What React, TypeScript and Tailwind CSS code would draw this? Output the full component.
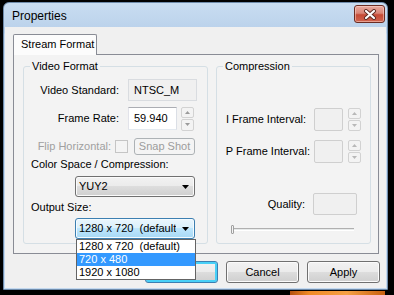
import React from "react";

const btn =
  "border border-[#707070] rounded-[3px] bg-[linear-gradient(#f2f2f2_0%,#ebebeb_50%,#dddddd_50%,#cfcfcf_100%)] shadow-[inset_0_0_0_1px_#fbfbfb]";

function Spinner({ dim = false }: { dim?: boolean }) {
  const c = dim ? "#b8b8b8" : "#9a9a9a";
  return (
    <div className="flex flex-col gap-[1px] w-[13px] h-full">
      <div className="flex-1 border border-[#d2d2d2] rounded-[2px] bg-[#f3f3f3] flex items-center justify-center">
        <svg width="5" height="3" viewBox="0 0 5 3">
          <path d="M0 3 L2.5 0 L5 3Z" fill={c} />
        </svg>
      </div>
      <div className="flex-1 border border-[#d2d2d2] rounded-[2px] bg-[#f3f3f3] flex items-center justify-center">
        <svg width="5" height="3" viewBox="0 0 5 3">
          <path d="M0 0 L2.5 3 L5 0Z" fill={c} />
        </svg>
      </div>
    </div>
  );
}

function Arrow() {
  return (
    <svg width="7" height="4" viewBox="0 0 7 4">
      <path d="M0 0 L7 0 L3.5 4Z" fill="#000" />
    </svg>
  );
}

export default function App() {
  return (
    <div className="w-[394px] h-[295px] bg-black overflow-hidden pt-[2px] pl-[3px] font-['Liberation_Sans',Arial,sans-serif] text-[11px] leading-[13px] text-black">
      <div className="w-[385px] h-[288px] flex flex-col border border-[#6f8cac] rounded-t-[6px] p-[1px] bg-[linear-gradient(#c9ddf1,#b8d0ea_30px,#c4d9ef_31px)]">
        {/* title bar */}
        <div className="h-[23px] flex items-start justify-between pl-[7px] pr-[1px]">
          <span className="mt-[5px] text-[12px] leading-[14px] text-black">Properties</span>
          <div className="mt-[1px] w-[31px] h-[18px] rounded-[3px] border border-[#6b2c22] bg-[linear-gradient(#e8aaa0_0%,#d98576_45%,#c54a35_55%,#d0644f_100%)] shadow-[inset_0_0_0_1px_rgba(255,220,210,0.5)] flex items-center justify-center">
            <svg width="14" height="11" viewBox="0 0 14 11">
              <path d="M3 2 L11 9 M11 2 L3 9" stroke="#5a2a22" strokeWidth="4" strokeLinecap="round" />
              <path d="M3 2 L11 9 M11 2 L3 9" stroke="#ffffff" strokeWidth="2.2" strokeLinecap="round" />
            </svg>
          </div>
        </div>
        {/* client */}
        <div className="flex-1 bg-[#f0f0f0] flex flex-col pl-[8px]">
          {/* tab */}
          <div className="mt-[7px] w-[84px] h-[21px] -mb-[1px] relative z-10 border border-b-0 border-[#898c95] rounded-t-[2px] bg-[#fcfcfc] flex items-center pl-[7px] pb-[1px]">
            Stream Format
          </div>
          {/* panel */}
          <div className="w-[366px] h-[200px] border border-[#898c95] bg-[#f3f3f3] flex pl-[9px] pt-[5px] gap-[8px]">
            {/* Video Format */}
            <fieldset className="w-[185px] h-[184px] border border-[#d5dfe5] rounded-[3px] flex flex-col">
              <legend className="ml-[6px] px-[2px]">Video Format</legend>
              <div className="mt-[6px] h-[22px] flex items-center">
                <div className="w-[95px] text-right">Video Standard:</div>
                <div className="ml-[9px] w-[69px] h-full border border-[#d9dce0] bg-[#f0f0f0] flex items-center pl-[5px]">
                  NTSC_M
                </div>
              </div>
              <div className="mt-[6px] h-[23px] flex items-center">
                <div className="w-[95px] text-right">Frame Rate:</div>
                <div className="ml-[9px] w-[49px] h-full border border-[#abadb3] border-l-[#e2e3ea] border-r-[#dbdfe6] border-b-[#e3e9ef] bg-white flex items-center pl-[5px]">
                  59.940
                </div>
                <div className="ml-[4px] h-[24px]">
                  <Spinner />
                </div>
              </div>
              <div className="mt-[8px] h-[17px] flex items-center">
                <div className="w-[87px] text-right text-[#a0a0a0]">Flip Horizontal:</div>
                <div className="ml-[4px] w-[13px] h-[13px] border border-[#c5c5c5] bg-[#f4f4f4]" />
                <div className="ml-[6px] w-[61px] h-[17px] border border-[#adb2b5] rounded-[3px] bg-[#f4f4f4] text-[#9c9c9c] flex items-center justify-center">
                  Snap Shot
                </div>
              </div>
              <div className="mt-[3px] pl-[7px]">Color Space / Compression:</div>
              <div className={"mt-[5px] ml-[51px] w-[120px] h-[21px] flex items-center justify-between pl-[3px] pr-[5px] " + btn}>
                <span>YUY2</span>
                <Arrow />
              </div>
              <div className="mt-[4px] pl-[7px]">Output Size:</div>
              <div className="relative mt-[4px] ml-[51px] w-[120px] h-[21px]">
                <div className="w-full h-full border border-[#3c7fb1] rounded-[3px] bg-[linear-gradient(#eaf6fd_0%,#d9f0fc_50%,#bee6fd_50%,#a7d9f5_100%)] shadow-[inset_0_0_0_1px_#f4fbff] flex items-center justify-between pl-[3px] pr-[5px]">
                  <span className="w-[97px] whitespace-nowrap overflow-hidden">1280 x 720 &nbsp;(default)</span>
                  <span className="shrink-0"><Arrow /></span>
                </div>
                <div className="absolute left-[1px] top-full w-[120px] border border-[#646464] bg-white z-20 flex flex-col">
                  <div className="h-[13px] pl-[2px] whitespace-nowrap">1280 x 720 &nbsp;(default)</div>
                  <div className="h-[13px] pl-[2px] bg-[#3399ff] text-white">720 x 480</div>
                  <div className="h-[13px] pl-[2px]">1920 x 1080</div>
                </div>
              </div>
            </fieldset>
            {/* Compression */}
            <fieldset className="w-[155px] h-[184px] border border-[#d5dfe5] rounded-[3px] flex flex-col">
              <legend className="ml-[6px] px-[2px]">Compression</legend>
              <div className="mt-[35px] h-[23px] flex items-center">
                <div className="w-[89px] text-right">I Frame Interval:</div>
                <div className="ml-[8px] w-[29px] h-full border border-[#cfcfcf] rounded-[2px] bg-[#f0f0f0]" />
                <div className="ml-[5px] h-[23px]">
                  <Spinner dim />
                </div>
              </div>
              <div className="mt-[9px] h-[23px] flex items-center">
                <div className="w-[93px] text-right">P Frame Interval:</div>
                <div className="ml-[4px] w-[29px] h-full border border-[#cfcfcf] rounded-[2px] bg-[#f0f0f0]" />
                <div className="ml-[5px] h-[23px]">
                  <Spinner dim />
                </div>
              </div>
              <div className="mt-[30px] h-[22px] flex items-center">
                <div className="w-[88px] text-right">Quality:</div>
                <div className="ml-[8px] w-[44px] h-full border border-[#cfcfcf] rounded-[2px] bg-[#f0f0f0]" />
              </div>
              <div className="mt-[10px] ml-[14px] w-[123px] h-[9px] flex items-center">
                <div className="w-[3px] h-[9px] border border-[#a0a0a0] rounded-[1px] bg-[#f4f4f4] shrink-0" />
                <div className="flex-1 h-[3px] border-t border-[#b0b0b0] border-b border-b-[#ffffff] bg-[#e7eaea]" />
              </div>
            </fieldset>
          </div>
          {/* buttons */}
          <div className="mt-[7px] w-[367px] flex justify-end gap-[8px]">
            <div className="w-[73px] h-[22px] border border-[#3c7fb1] rounded-[3px] bg-[linear-gradient(#f2f2f2_0%,#ebebeb_50%,#dddddd_50%,#cfcfcf_100%)] shadow-[inset_0_0_0_2px_#48d0f7] flex items-center justify-center">
              OK
            </div>
            <div className={"w-[73px] h-[22px] flex items-center justify-center " + btn}>Cancel</div>
            <div className={"w-[73px] h-[22px] flex items-center justify-center " + btn}>Apply</div>
          </div>
        </div>
      </div>
      <div className="mt-[1px] ml-[287px] w-[95px] h-[4px] bg-[linear-gradient(to_right,#b4500e,#f08a25_20%,#f6a044_60%,#c8600f)]" />
    </div>
  );
}
